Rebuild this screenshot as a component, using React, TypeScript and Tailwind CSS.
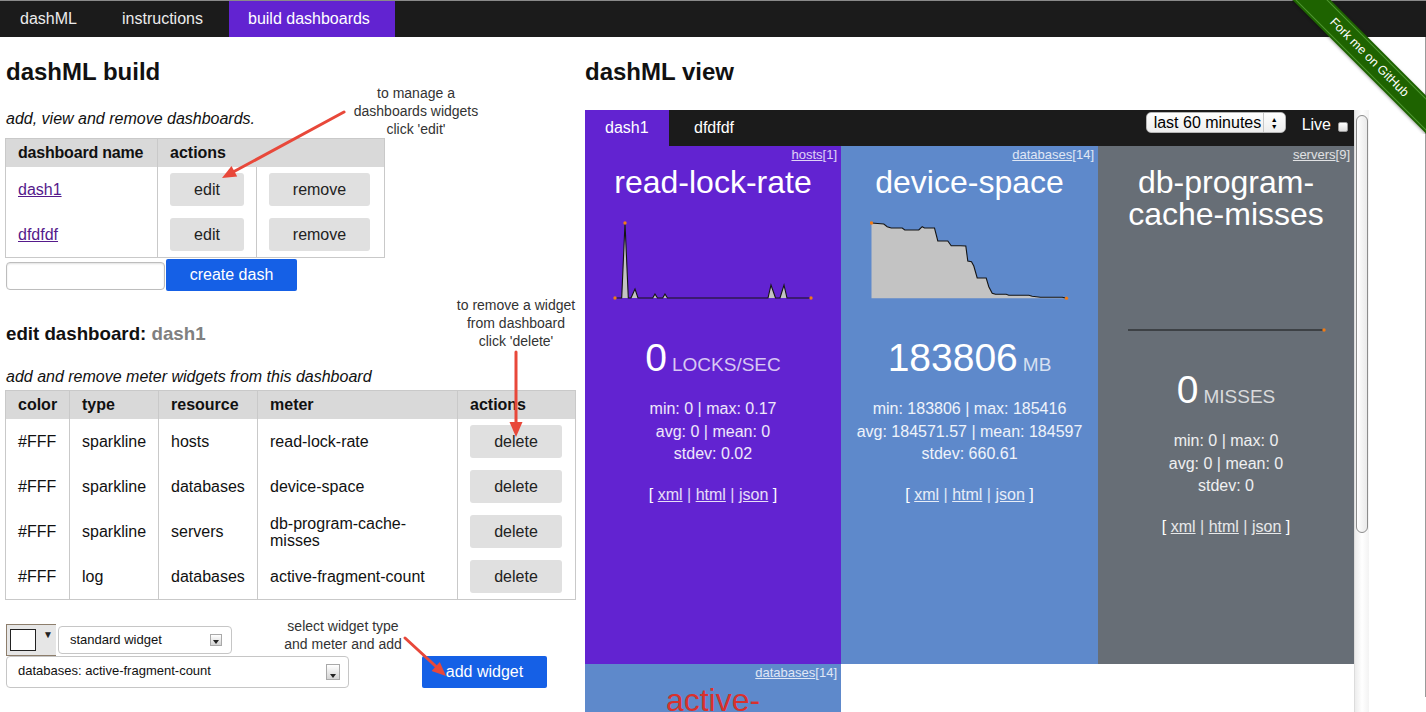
import React from 'react';

type Pt = [number, number];

// sparkline points, in page pixels (each svg uses a viewBox at its own spot)
const lockPts: Pt[] = [
  [615, 298], [621.7, 298], [625, 223], [628.3, 298], [631, 298], [635, 289], [638, 298],
  [652.7, 298], [655, 294], [657.5, 298], [662.7, 298], [665, 294], [667.5, 298],
  [768, 298], [771, 285], [775.5, 298], [780, 298], [784, 285], [787, 298], [811, 298],
];

const spacePts: Pt[] = [
  [871, 223], [883.3, 224], [886.7, 226.7], [890.7, 228], [901.7, 228], [904.3, 230],
  [918.3, 230], [921.7, 226.7], [924, 228], [934, 228], [937.3, 241], [947.3, 241],
  [950.7, 245.7], [960, 245.7], [965.3, 246], [967.3, 261], [971, 261.7], [973.3, 266],
  [976.7, 278], [985.7, 278], [988.3, 286.7], [991.7, 293.3], [995, 294.3], [1005.7, 294.3],
  [1008.3, 295.3], [1028.3, 295.3], [1031.7, 296.3], [1040, 297.3], [1061.7, 297.3], [1066, 298.3],
];

const missPts: Pt[] = [[1128, 330], [1324, 330]];

const toPath = (pts: Pt[]) => pts.map((p, i) => `${i ? 'L' : 'M'}${p[0]},${p[1]}`).join(' ');

interface SparkProps {
  origin: Pt;
  pts: Pt[];
  base: number;
  dots: Pt[];
  fill?: boolean;
}

const Spark = ({ origin, pts, base, dots, fill = true }: SparkProps) => (
  <svg
    width={200}
    height={80}
    viewBox={`${origin[0]} ${origin[1]} 200 80`}
    className="mx-auto mt-[23px] block"
  >
    {fill && (
      <path
        d={`${toPath(pts)} L${pts[pts.length - 1][0]},${base} L${pts[0][0]},${base} Z`}
        fill="#c3c3c3"
      />
    )}
    <path d={toPath(pts)} fill="none" stroke="#141414" strokeWidth={1.1} />
    {dots.map((d, i) => (
      <circle key={i} cx={d[0]} cy={d[1]} r={1.7} fill="#f07b16" />
    ))}
  </svg>
);

interface WidgetData {
  resource: string;
  count: number;
  title: string;
  titleClass: string;
  bg: string;
  value?: string;
  unit?: string;
  stats?: string[];
  chart?: React.ReactNode;
}

const widgets: WidgetData[] = [
  {
    resource: 'hosts',
    count: 1,
    title: 'read-lock-rate',
    titleClass: 'text-white',
    bg: 'bg-[#6223d1]',
    value: '0',
    unit: 'locks/sec',
    stats: ['min: 0 | max: 0.17', 'avg: 0 | mean: 0', 'stdev: 0.02'],
    chart: <Spark origin={[613, 221]} pts={lockPts} base={298} dots={[[615, 298], [625, 223], [811, 298]]} />,
  },
  {
    resource: 'databases',
    count: 14,
    title: 'device-space',
    titleClass: 'text-white',
    bg: 'bg-[#5e89cb]',
    value: '183806',
    unit: 'MB',
    stats: ['min: 183806 | max: 185416', 'avg: 184571.57 | mean: 184597', 'stdev: 660.61'],
    chart: <Spark origin={[869.5, 221]} pts={spacePts} base={298.3} dots={[[871, 223], [1066, 298.3]]} />,
  },
  {
    resource: 'servers',
    count: 9,
    title: 'db-program-cache-misses',
    titleClass: 'text-white',
    bg: 'bg-[#676e76]',
    value: '0',
    unit: 'misses',
    stats: ['min: 0 | max: 0', 'avg: 0 | mean: 0', 'stdev: 0'],
    chart: <Spark origin={[1126, 253]} pts={missPts} base={330} dots={[[1324, 330]]} fill={false} />,
  },
  {
    resource: 'databases',
    count: 14,
    title: 'active-fragment-count',
    titleClass: 'text-[#d8312d]',
    bg: 'bg-[#5e89cb]',
  },
];

const WidgetCard = ({ w }: { w: WidgetData }) => (
  <div className={`h-[518px] text-center ${w.bg}`}>
    <div className="pr-[4px] pt-[2px] text-right text-[13px] leading-[14px] text-white/80">
      <span className="underline">{w.resource}</span>[{w.count}]
    </div>
    <div className={`mt-[4px] px-[16px] text-[32px] leading-[32px] ${w.titleClass}`}>{w.title}</div>
    {w.chart}
    {w.value && (
      <>
        <div className="mt-[35px] leading-[44px] text-white">
          <span className="text-[39px]">{w.value}</span>
          <span className="ml-[5px] text-[19px] uppercase text-white/75">{w.unit}</span>
        </div>
        <div className="mt-[10px] text-[16px] leading-[22.5px] text-white/90">
          {w.stats?.map((s) => (
            <div key={s}>{s}</div>
          ))}
        </div>
        <div className="mt-[18px] text-[16px] leading-[22px] text-white">
          [ <span className="underline text-white/85">xml</span> <span className="text-white/80">|</span>{' '}
          <span className="underline text-white/85">html</span> <span className="text-white/80">|</span>{' '}
          <span className="underline text-white/85">json</span> ]
        </div>
      </>
    )}
  </div>
);

const GrayButton = ({ label, width }: { label: string; width: string }) => (
  <button className={`flex h-[33px] items-center justify-center rounded-[3px] bg-[#e0e0e0] text-[16px] text-[#222] ${width}`}>
    {label}
  </button>
);

const SelectArrow = ({ size }: { size: string }) => (
  <div className={`flex items-end justify-center border border-[#a9a9a9] bg-linear-to-b from-white to-[#d4d4d4] pb-[1px] ${size}`}>
    <div className="h-0 w-0 border-x-[3px] border-t-[4px] border-x-transparent border-t-[#222]" />
  </div>
);

const meterRows = [
  ['#FFF', 'sparkline', 'hosts', 'read-lock-rate'],
  ['#FFF', 'sparkline', 'databases', 'device-space'],
  ['#FFF', 'sparkline', 'servers', 'db-program-cache-misses'],
  ['#FFF', 'log', 'databases', 'active-fragment-count'],
];

const Arrows = () => (
  <svg className="pointer-events-none absolute left-0 top-0" width={1426} height={712}>
    <g stroke="#e8483a" strokeWidth={3} strokeLinecap="round" fill="#e8483a">
      <line x1={344} y1={112} x2={234} y2={171.5} />
      <polygon points="222,178 237.2,176.6 231.5,166" stroke="none" />
      <line x1={516} y1={352} x2={516} y2={423} />
      <polygon points="516,437 509.5,422 522.5,422" stroke="none" />
      <line x1={405} y1={638} x2={436} y2={666.5} />
      <polygon points="446,676 431.6,670.9 439.8,662.1" stroke="none" />
    </g>
  </svg>
);

const Ribbon = () => (
  <div className="pointer-events-none absolute right-0 top-0 z-10 h-[134px] w-[134px] overflow-hidden">
    <div className="absolute left-[-38px] top-[44px] flex h-[27px] w-[230px] rotate-45 items-center justify-center bg-[#1e6300] text-[12.5px] text-white shadow-[0_1px_3px_rgba(0,0,0,0.35)]">
      <div className="absolute inset-x-0 bottom-[2px] top-[2px] border-y border-[#4f9830]" />
      <span className="relative">Fork me on GitHub</span>
    </div>
  </div>
);

export default function App() {
  return (
    <div className="relative h-[712px] w-[1426px] overflow-hidden bg-white font-['Liberation_Sans',Arial,sans-serif] text-[16px] text-[#111]">
      {/* top navigation */}
      <nav className="flex h-[37px] border-t border-[#8a8a8a] bg-[#1b1b1b] text-[16px] leading-[36px] text-[#ececec]">
        <div className="w-[100px] pl-[20px]">dashML</div>
        <div className="w-[129px] pl-[22px]">instructions</div>
        <div className="w-[166px] bg-[#6223d1] pl-[19px] text-white">build dashboards</div>
      </nav>

      <div className="flex h-[660px] border-r border-[#9a9a9a]">
        {/* build column */}
        <div className="w-[585px] shrink-0 pl-[5px]">
          <h2 className="mt-[21px] pl-[1px] text-[24px] font-bold leading-[28px]">dashML build</h2>
          <p className="mt-[24px] pl-[1px] italic leading-[18px]">add, view and remove dashboards.</p>

          <div className="mt-[10px] w-[380px] border border-[#c9c9c9]">
            <div className="grid h-[28px] grid-cols-[152px_226px] divide-x divide-[#c9c9c9] bg-[#d9d9d9] font-bold leading-[18px]">
              <div className="flex items-center whitespace-nowrap pl-[12px] tracking-[-0.2px]">dashboard name</div>
              <div className="flex items-center px-[12px]">actions</div>
            </div>
            {['dash1', 'dfdfdf'].map((name) => (
              <div key={name} className="grid h-[45px] grid-cols-[152px_99px_127px] divide-x divide-[#c9c9c9]">
                <div className="flex items-center px-[12px]">
                  <span className="text-[#551a8b] underline">{name}</span>
                </div>
                <div className="flex items-center px-[12px]">
                  <GrayButton label="edit" width="w-[74px]" />
                </div>
                <div className="flex items-center px-[12px]">
                  <GrayButton label="remove" width="w-[101px]" />
                </div>
              </div>
            ))}
          </div>

          <div className="mt-[1px] flex items-start">
            <input className="ml-[1px] mt-[3px] h-[28px] w-[159px] rounded-[4px] border border-[#bdbdbd] shadow-[inset_0_1px_2px_rgba(0,0,0,0.12)]" />
            <button className="ml-[1px] h-[32px] w-[131px] rounded-[2px] bg-[#1560e6] text-[16px] text-white">
              create dash
            </button>
          </div>

          <h3 className="mt-[32px] pl-[1px] text-[18.72px] font-bold leading-[22px]">
            edit dashboard: <span className="text-[#808080]">dash1</span>
          </h3>
          <p className="mt-[23px] pl-[1px] italic leading-[18px]">add and remove meter widgets from this dashboard</p>

          <div className="mt-[4px] w-[571px] border border-[#c9c9c9] leading-[18px]">
            <div className="grid h-[28px] grid-cols-[64px_89px_99px_200px_117px] divide-x divide-[#c9c9c9] bg-[#d9d9d9] font-bold">
              {['color', 'type', 'resource', 'meter', 'actions'].map((h) => (
                <div key={h} className="flex items-center px-[12px]">
                  {h}
                </div>
              ))}
            </div>
            {meterRows.map((r) => (
              <div key={r[3]} className="grid h-[45px] grid-cols-[64px_89px_99px_200px_117px] divide-x divide-[#c9c9c9]">
                {r.map((c, i) => (
                  <div key={i} className={`flex items-center px-[12px] ${i === 3 ? 'leading-[17px]' : ''}`}>
                    {c}
                  </div>
                ))}
                <div className="flex items-center px-[12px]">
                  <GrayButton label="delete" width="w-[92px]" />
                </div>
              </div>
            ))}
          </div>

          {/* add widget form */}
          <div className="mt-[24px] text-[13px]">
            <div className="flex items-start">
              <div className="ml-[1px] flex h-[32px] w-[50px] items-start border-y border-l border-[#8d7e6c] bg-[#e6e6e6] pl-[3px] pt-[4px]">
                <div className="h-[22px] w-[26px] border-[1.5px] border-[#222] bg-white" />
                <span className="ml-[7px] mt-[-2px] text-[10px] text-[#222]">▼</span>
              </div>
              <div className="ml-[2px] mt-[2px] flex h-[28px] w-[174px] items-center rounded-[4px] border border-[#c6c6c6] bg-white pl-[11px] pr-[9px]">
                <span>standard widget</span>
                <div className="ml-auto">
                  <SelectArrow size="h-[12px] w-[12px]" />
                </div>
              </div>
            </div>
            <div className="flex items-start">
              <div className="ml-[1px] flex h-[32px] w-[343px] items-center rounded-[4px] border border-[#c6c6c6] bg-white pb-[3px] pl-[11px] pr-[8px]">
                <span>databases: active-fragment-count</span>
                <div className="ml-auto pt-[3px]">
                  <SelectArrow size="h-[16px] w-[14px]" />
                </div>
              </div>
              <button className="ml-[73px] h-[32px] w-[125px] rounded-[2px] bg-[#1560e6] text-[16px] text-white">
                add widget
              </button>
            </div>
          </div>
        </div>

        {/* view column */}
        <div className="w-[784px] shrink-0">
          <h2 className="mt-[21px] text-[24px] font-bold leading-[28px]">dashML view</h2>
          <div className="mt-[24px] flex">
            <div className="w-[769px] shrink-0">
              <div className="flex h-[36px] bg-[#1b1b1b] text-white">
                <div className="flex w-[84px] items-center bg-[#6223d1] pl-[20px]">dash1</div>
                <div className="flex items-center pl-[25px]">dfdfdf</div>
                <div className="ml-auto flex items-start pr-[6px]">
                  <div className="mt-[2px] flex h-[21px] w-[140px] items-center rounded-[5px] border border-[#b5b5b5] bg-linear-to-b from-white to-[#ededed] text-black">
                    <span className="pl-[7px] text-[16px] leading-[20px]">last 60 minutes</span>
                    <div className="ml-auto flex h-full w-[22px] flex-col items-center justify-center border-l border-[#c8c8c8] text-[7px] leading-[7px]">
                      <span>▲</span>
                      <span>▼</span>
                    </div>
                  </div>
                  <span className="ml-[16px] mt-[5px] leading-[20px]">Live</span>
                  <div className="ml-[7px] mt-[12px] h-[10px] w-[10px] rounded-[2px] border border-[#999] bg-linear-to-b from-white to-[#dcdcdc]" />
                </div>
              </div>
              <div className="grid grid-cols-[256px_257px_256px]">
                {widgets.map((w, i) => (
                  <WidgetCard key={i} w={w} />
                ))}
              </div>
            </div>
            {/* scrollbar */}
            <div className="h-[620px] w-[15px] shrink-0 border-l border-[#dcdcdc] bg-linear-to-r from-[#ececec] via-white to-[#f3f3f3]">
              <div className="ml-[1px] mt-[5px] h-[418px] w-[12px] rounded-full border border-[#8c8c8c] bg-linear-to-r from-white to-[#e9e9e9]" />
            </div>
          </div>
        </div>
      </div>

      {/* annotations */}
      <div className="absolute left-[336px] top-[84px] w-[160px] text-center text-[14px] leading-[18px] text-[#333]">
        to manage a<br />
        dashboards widgets<br />
        click 'edit'
      </div>
      <div className="absolute left-[436px] top-[296px] w-[160px] text-center text-[14px] leading-[18px] text-[#333]">
        to remove a widget<br />
        from dashboard<br />
        click 'delete'
      </div>
      <div className="absolute left-[263px] top-[617px] w-[160px] text-center text-[14px] leading-[18px] text-[#333]">
        select widget type<br />
        and meter and add
      </div>
      <Arrows />
      <Ribbon />
    </div>
  );
}
